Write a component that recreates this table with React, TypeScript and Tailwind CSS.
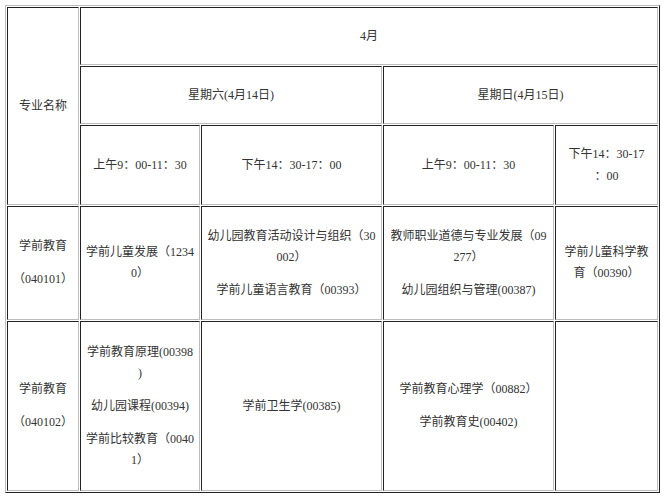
const cell =
  "border border-solid border-t-[#222] border-l-[#222] border-r-[#bdbdbd] border-b-[#bdbdbd] px-[5px] text-center align-middle";

const Lines = ({ items }: { items: React.ReactNode[] }) => (
  <div className="flex flex-col gap-[12px]">
    {items.map((item, i) => (
      <p key={i} className="leading-[21px]">
        {item}
      </p>
    ))}
  </div>
);

const App = () => {
  return (
    <div
      className="min-h-[498px] bg-white text-[12px] text-[#333]"
      style={{ fontFamily: '"Liberation Serif", "Noto Sans CJK SC", serif' }}
    >
      <table className="ml-[5px] mt-[5px] w-[655px] table-fixed border-separate border-spacing-[1px] border border-solid border-t-[#bdbdbd] border-l-[#bdbdbd] border-r-[#222] border-b-[#222]">
        <colgroup>
          <col className="w-[72px]" />
          <col className="w-[120px]" />
          <col className="w-[181px]" />
          <col className="w-[171px]" />
          <col className="w-[103px]" />
        </colgroup>
        <tbody>
          {/* Month header */}
          <tr className="h-[58px]">
            <td rowSpan={3} className={cell}>
              专业名称
            </td>
            <td colSpan={4} className={cell}>
              4月
            </td>
          </tr>

          {/* Days */}
          <tr className="h-[58px]">
            <td colSpan={2} className={cell}>
              星期六(4月14日)
            </td>
            <td colSpan={2} className={cell}>
              星期日(4月15日)
            </td>
          </tr>

          {/* Time slots */}
          <tr className="h-[80px]">
            <td className={cell}>上午9：00-11：30</td>
            <td className={cell}>下午14：30-17：00</td>
            <td className={cell}>上午9：00-11：30</td>
            <td className={`${cell} leading-[22px]`}>
              下午14：30-17
              <br />
              ：00
            </td>
          </tr>

          {/* 040101 */}
          <tr className="h-[114px]">
            <td className={cell}>
              <Lines items={["学前教育", "（040101）"]} />
            </td>
            <td className={`${cell} leading-[21px]`}>
              学前儿童发展（1234
              <br />
              0）
            </td>
            <td className={cell}>
              <Lines
                items={[
                  <>
                    幼儿园教育活动设计与组织（30
                    <br />
                    002）
                  </>,
                  "学前儿童语言教育（00393）",
                ]}
              />
            </td>
            <td className={cell}>
              <Lines
                items={[
                  <>
                    教师职业道德与专业发展（09
                    <br />
                    277）
                  </>,
                  "幼儿园组织与管理(00387)",
                ]}
              />
            </td>
            <td className={`${cell} leading-[21px]`}>
              学前儿童科学教
              <br />
              育（00390）
            </td>
          </tr>

          {/* 040102 */}
          <tr className="h-[170px]">
            <td className={cell}>
              <Lines items={["学前教育", "（040102）"]} />
            </td>
            <td className={cell}>
              <Lines
                items={[
                  <>
                    学前教育原理(00398
                    <br />)
                  </>,
                  "幼儿园课程(00394)",
                  <>
                    学前比较教育（0040
                    <br />
                    1）
                  </>,
                ]}
              />
            </td>
            <td className={cell}>学前卫生学(00385)</td>
            <td className={cell}>
              <Lines items={["学前教育心理学（00882）", "学前教育史(00402)"]} />
            </td>
            <td className={cell}></td>
          </tr>
        </tbody>
      </table>
    </div>
  );
};

export default App;
